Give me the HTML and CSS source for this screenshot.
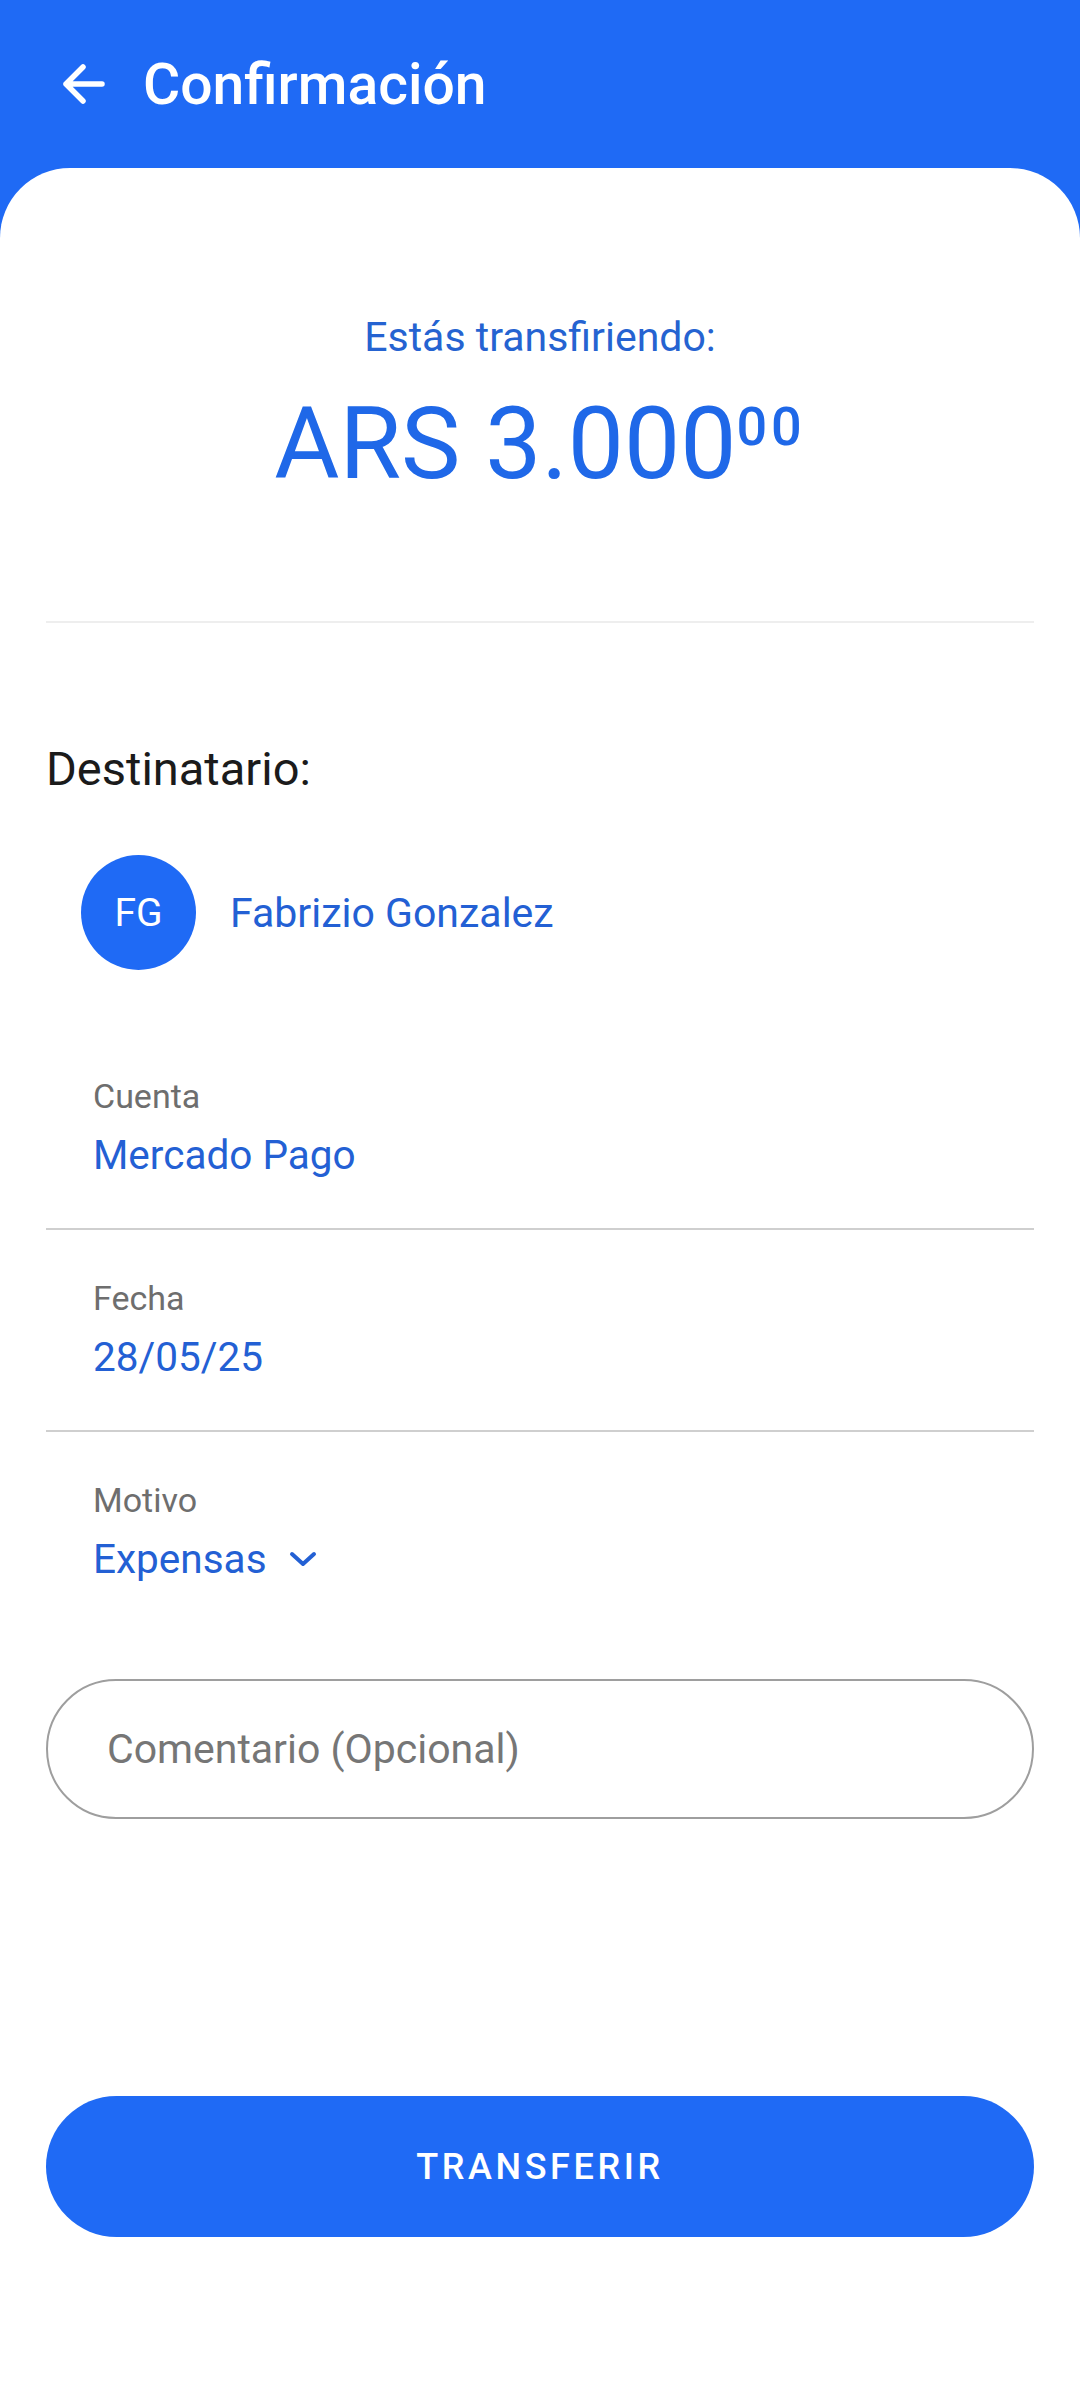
FILE: index.html
```html
<!DOCTYPE html>
<html lang="es">
<head>
  <meta charset="utf-8">
  <title>Confirmación</title>
  <link rel="stylesheet" href="styles.css">
</head>
<body>
  <div class="page">
    <div class="topbar">
      <svg class="back" viewBox="0 0 50 50" width="50" height="50">
        <path d="M44 25 H8 M25 8 L8 25 L25 42" fill="none" stroke="#fff" stroke-width="5.5" stroke-linecap="round" stroke-linejoin="round"/>
      </svg>
      <h1 class="title">Confirmación</h1>
    </div>

    <div class="sheet">
      <p class="lead">Estás transfiriendo:</p>
      <p class="amount">ARS 3.000<sup class="cents">00</sup></p>

      <hr class="rule">

      <p class="section">Destinatario:</p>
      <div class="contact">
        <div class="avatar">FG</div>
        <span class="contact-name">Fabrizio Gonzalez</span>
      </div>

      <div class="field">
        <span class="field-label">Cuenta</span>
        <span class="field-value">Mercado Pago</span>
      </div>
      <div class="field">
        <span class="field-label">Fecha</span>
        <span class="field-value">28/05/25</span>
      </div>
      <div class="field field-last">
        <span class="field-label">Motivo</span>
        <span class="field-value">Expensas
          <svg class="chevron" viewBox="0 0 30 20" width="30" height="20">
            <path d="M4 5 L15 15 L26 5" fill="none" stroke="#2360d4" stroke-width="4" stroke-linecap="round" stroke-linejoin="round"/>
          </svg>
        </span>
      </div>

      <div class="comment">Comentario (Opcional)</div>

      <button class="submit">TRANSFERIR</button>
    </div>
  </div>
</body>
</html>
```

FILE: styles.css
```css
html, body {
  margin: 0;
  padding: 0;
}
body {
  width: 1080px;
  height: 2403px;
  background: #1f6af5;
  font-family: Roboto, "Liberation Sans", sans-serif;
  overflow: hidden;
}
.page {
  display: flex;
  flex-direction: column;
  height: 2403px;
}

.topbar {
  height: 168px;
  display: flex;
  align-items: center;
  padding-left: 58px;
  gap: 35px;
  box-sizing: border-box;
}
.back {
  display: block;
}
.title {
  margin: 0;
  color: #fff;
  font-size: 57px;
  font-weight: 500;
  line-height: 1;
}

.sheet {
  flex: 1;
  background: #fff;
  border-radius: 70px 70px 0 0;
  padding: 145px 46px 0;
  display: flex;
  flex-direction: column;
}

.lead {
  margin: 0;
  text-align: center;
  color: #2563d1;
  font-size: 41px;
  line-height: 48px;
}
.amount {
  margin: 28px 0 0;
  text-align: center;
  color: #1f68e8;
  font-size: 100px;
  line-height: 110px;
}
.cents {
  font-size: 54px;
  font-weight: 500;
  letter-spacing: 4px;
  vertical-align: 33px;
  line-height: 0;
}

.rule {
  margin: 122px 0 0;
  border: 0;
  height: 2px;
  background: #eeeeee;
}

.section {
  margin: 119px 0 0;
  color: #1b1b1b;
  font-size: 47px;
  line-height: 54px;
}

.contact {
  display: flex;
  align-items: center;
  gap: 34px;
  margin-top: 59px;
  padding-left: 35px;
}
.avatar {
  width: 115px;
  height: 115px;
  border-radius: 50%;
  background: #1f6af5;
  color: #fff;
  font-size: 39px;
  display: flex;
  align-items: center;
  justify-content: center;
}
.contact-name {
  color: #2360d4;
  font-size: 41px;
}

.field {
  display: flex;
  flex-direction: column;
  padding: 48px 0 49px 47px;
  border-bottom: 2px solid #cfcfcf;
}
.contact + .field {
  margin-top: 58px;
}
.field-last {
  border-bottom: 0;
  padding-bottom: 0;
}
.field-label {
  color: #6e6e6e;
  font-size: 34px;
  line-height: 40px;
}
.field-value {
  margin-top: 15px;
  color: #2360d4;
  font-size: 40.5px;
  line-height: 48px;
  display: flex;
  align-items: center;
}
.chevron {
  margin-left: 21px;
}

.comment {
  margin-top: 96px;
  height: 140px;
  box-sizing: border-box;
  border: 2px solid #9e9e9e;
  border-radius: 70px;
  padding-left: 59px;
  display: flex;
  align-items: center;
  color: #767676;
  font-size: 41px;
}

.submit {
  margin-top: 277px;
  height: 141px;
  border: 0;
  border-radius: 71px;
  background: #1f6af5;
  color: #fff;
  font-family: Roboto, "Liberation Sans", sans-serif;
  font-size: 36px;
  font-weight: 500;
  letter-spacing: 3.6px;
}
```
